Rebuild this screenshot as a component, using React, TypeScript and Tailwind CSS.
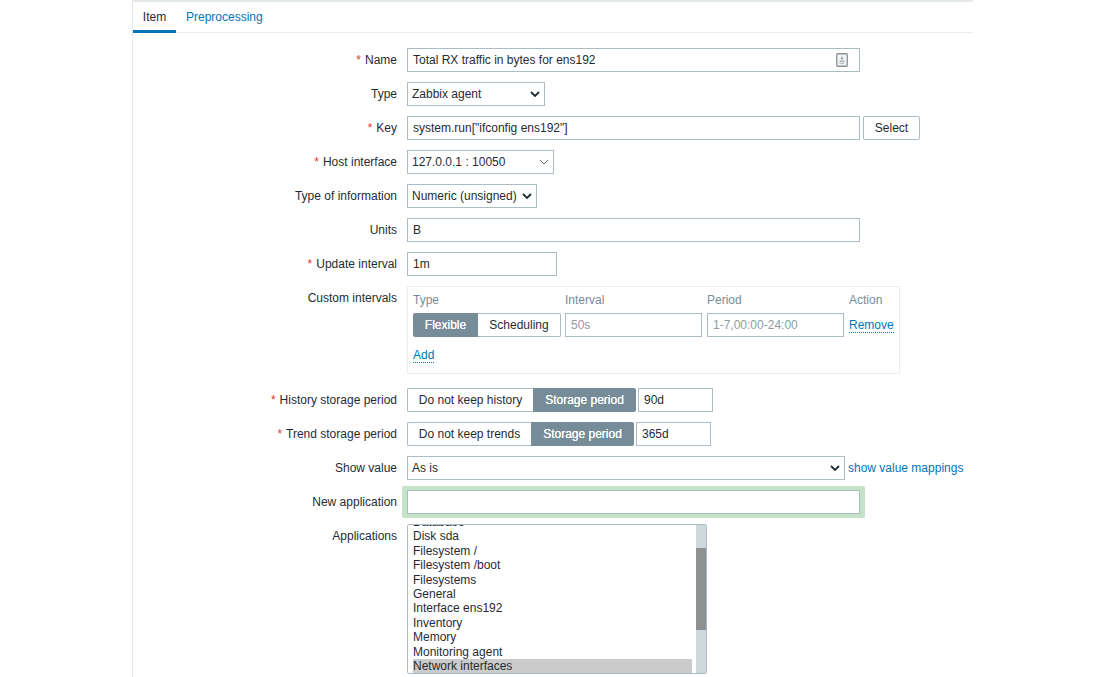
import React from "react";

const Req = () => <span className="text-[#e33734] mr-[4px]">*</span>;

function Row({ label, req, children, cls }: { label: string; req?: boolean; children: React.ReactNode; cls?: string }) {
  return (
    <div className={"flex " + (cls ?? "")}>
      <div className="w-[274px] shrink-0 pr-[10px] text-right h-[24px] leading-[24px] text-[#1f2c33]">
        {req && <Req />}
        {label}
      </div>
      <div className="flex items-start min-w-0">{children}</div>
    </div>
  );
}

const Input = ({ value, w, placeholder, children }: { value?: string; w: string; placeholder?: string; children?: React.ReactNode }) => (
  <div className={"relative h-[24px] border border-[#acbbc4] bg-white px-[5px] leading-[22px] text-[#1f2c33] " + w}>
    {placeholder ? <span className="text-[#8f9ba3]">{placeholder}</span> : value}
    {children}
  </div>
);

const Chevron = ({ thin }: { thin?: boolean }) => (
  <svg width="10" height="6" viewBox="0 0 10 6" fill="none" className="shrink-0">
    <path d="M1 1l4 4 4-4" stroke={thin ? "#5a6972" : "#1f2c33"} strokeWidth={thin ? 1 : 1.8} />
  </svg>
);

const Select = ({ value, w, thin }: { value: string; w: string; thin?: boolean }) => (
  <div className={"flex items-center justify-between h-[24px] border border-[#acbbc4] bg-white pl-[4px] pr-[4px] text-[#1f2c33] " + w}>
    <span>{value}</span>
    <Chevron thin={thin} />
  </div>
);

const Seg = ({ a, b, aw, bw, activeFirst }: { a: string; b: string; aw: string; bw: string; activeFirst?: boolean }) => {
  const on = "bg-[#768d99] text-white [text-shadow:0_0_0.4px_#ffffff]";
  const off = "bg-white text-[#1f2c33] border border-[#acbbc4]";
  return (
    <div className="flex h-[24px] leading-[22px] text-center">
      <div className={"rounded-l-[2px] " + aw + " " + (activeFirst ? on + " leading-[24px]" : off + " border-r-0")}>{a}</div>
      <div className={"rounded-r-[2px] " + bw + " " + (activeFirst ? off + " border-l-0" : on + " leading-[24px]")}>{b}</div>
    </div>
  );
};

const LinkU = ({ children }: { children: React.ReactNode }) => (
  <span className="text-[#0275b8] border-b border-dotted border-[#0275b8] leading-[14px] inline-block">{children}</span>
);

const apps = ["Database", "Disk sda", "Filesystem /", "Filesystem /boot", "Filesystems", "General", "Interface ens192", "Inventory", "Memory", "Monitoring agent", "Network interfaces"];

export default function App() {
  return (
    <div className="h-[677px] overflow-hidden bg-white text-[12px] font-['Liberation_Sans',Arial,sans-serif]">
      <div className="ml-[132px] w-[841px] h-full border-l border-t-2 border-l-[#e4e9ec] border-t-[#e4e9ec]">
        <div className="flex h-[31px] border-b border-[#ebeef0]">
          <div className="w-[43px] h-[31px] text-center leading-[31px] text-[#1f2c33] border-b-[3px] border-[#0275b8]">Item</div>
          <div className="ml-[10px] leading-[31px] text-[#0275b8]">Preprocessing</div>
        </div>
        <div className="flex flex-col gap-[10px] pt-[15px]">
          <Row label="Name" req>
            <Input value="Total RX traffic in bytes for ens192" w="w-[453px]">
              <svg width="12" height="14" viewBox="0 0 12 14" className="absolute right-[11px] top-[4px]">
                <rect x="0.75" y="0.75" width="10.5" height="12.5" rx="1" fill="#f4f5f5" stroke="#8a9095" strokeWidth="1.3" />
                <path d="M6 3l1.6 3.2H4.4z" fill="#9aa0a4" />
                <rect x="3.5" y="7.5" width="5" height="1.2" fill="#9aa0a4" />
                <rect x="3.5" y="9.6" width="5" height="1.2" fill="#b5babd" />
              </svg>
            </Input>
          </Row>
          <Row label="Type">
            <Select value="Zabbix agent" w="w-[138px]" />
          </Row>
          <Row label="Key" req>
            <Input value={'system.run["ifconfig ens192"]'} w="w-[453px]" />
            <div className="ml-[3px] w-[57px] h-[24px] border border-[#acbbc4] rounded-[2px] text-center leading-[22px] text-[#1f2c33]">Select</div>
          </Row>
          <Row label="Host interface" req>
            <Select value="127.0.0.1 : 10050" w="w-[147px]" thin />
          </Row>
          <Row label="Type of information">
            <Select value="Numeric (unsigned)" w="w-[130px]" />
          </Row>
          <Row label="Units">
            <Input value="B" w="w-[453px]" />
          </Row>
          <Row label="Update interval" req>
            <Input value="1m" w="w-[150px]" />
          </Row>
          <Row label="Custom intervals">
            <div className="w-[493px] h-[88px] border border-[#ebeef0] px-[5px] pt-[6px]">
              <div className="flex h-[15px] leading-[15px] text-[#768d99]">
                <div className="w-[152px]">Type</div>
                <div className="w-[142px]">Interval</div>
                <div className="w-[142px]">Period</div>
                <div>Action</div>
              </div>
              <div className="flex items-center mt-[5px] h-[24px]">
                <Seg a="Flexible" b="Scheduling" aw="w-[65px]" bw="w-[83px]" activeFirst />
                <div className="ml-[4px]"><Input placeholder="50s" w="w-[137px]" /></div>
                <div className="ml-[5px]"><Input placeholder="1-7,00:00-24:00" w="w-[137px]" /></div>
                <div className="ml-[5px]"><LinkU>Remove</LinkU></div>
              </div>
              <div className="mt-[9px]"><LinkU>Add</LinkU></div>
            </div>
          </Row>
          <Row label="History storage period" req cls="mt-[4px]">
            <Seg a="Do not keep history" b="Storage period" aw="w-[126px]" bw="w-[103px]" />
            <div className="ml-[2px]"><Input value="90d" w="w-[75px]" /></div>
          </Row>
          <Row label="Trend storage period" req>
            <Seg a="Do not keep trends" b="Storage period" aw="w-[124px]" bw="w-[103px]" />
            <div className="ml-[2px]"><Input value="365d" w="w-[75px]" /></div>
          </Row>
          <Row label="Show value">
            <Select value="As is" w="w-[438px]" />
            <span className="ml-[3px] leading-[24px] text-[#0275b8]">show value mappings</span>
          </Row>
          <Row label="New application">
            <div className="-mx-[5px] -my-[4px] px-[5px] py-[4px] bg-[#c5e3c7] rounded-[2px]">
              <div className="w-[453px] h-[24px] border border-[#acbbc4] bg-white" />
            </div>
          </Row>
          <Row label="Applications">
            <div className="flex w-[300px] h-[150px] border border-[#acbbc4] rounded-[2px] overflow-hidden text-[#1f2c33]">
              <div className="w-[289px] pl-[5px] overflow-hidden">
                <div className="-mt-[10px] w-[279px]">
                  {apps.map((a, i) => (
                    <div key={a} className={"h-[14.4px] leading-[14px] " + (i === apps.length - 1 ? "bg-[#cbcbcb]" : "")}>{a}</div>
                  ))}
                </div>
              </div>
              <div className="w-[10px] bg-[#cfd9dd]">
                <div className="mt-[23px] h-[82px] bg-[#8f9191]" />
              </div>
            </div>
          </Row>
        </div>
      </div>
    </div>
  );
}
